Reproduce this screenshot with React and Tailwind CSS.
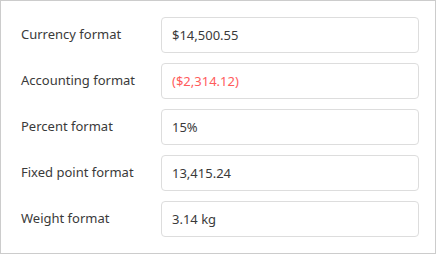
import React from 'react';

const rows = [
  { label: 'Currency format', value: '$14,500.55' },
  { label: 'Accounting format', value: '($2,314.12)', negative: true },
  { label: 'Percent format', value: '15%' },
  { label: 'Fixed point format', value: '13,415.24' },
  { label: 'Weight format', value: '3.14 kg' },
];

export default function App() {
  return (
    <div className="w-[436px] h-[254px] border border-[#cccccc] bg-white font-['Noto_Sans',sans-serif] text-[13px] text-[#3a3a3a]">
      <div className="flex flex-col gap-[10px] pt-4 pl-5 pr-4">
        {rows.map((row) => (
          <div key={row.label} className="flex items-center">
            <label className="w-[140px]">{row.label}</label>
            <input
              readOnly
              value={row.value}
              className={
                'w-[258px] h-9 px-[10px] rounded border border-[#dddddd] bg-white outline-none ' +
                (row.negative ? 'text-[#ff5c5c]' : 'text-[#3a3a3a]')
              }
            />
          </div>
        ))}
      </div>
    </div>
  );
}
